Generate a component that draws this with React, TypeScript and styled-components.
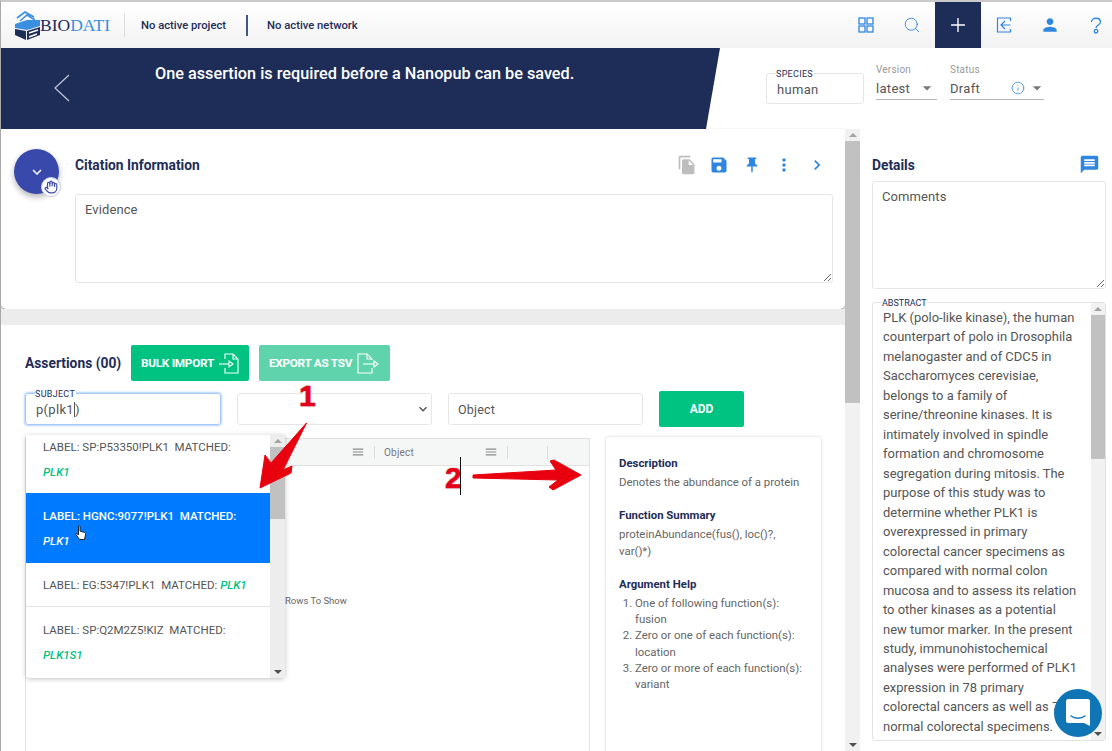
import React from 'react';
import styled, { createGlobalStyle } from 'styled-components';
import { MdFileCopy, MdSave, MdPushPin, MdMoreVert, MdChevronRight, MdMessage, MdPerson, MdMenu, MdKeyboardArrowDown, MdArrowDropDown } from 'react-icons/md';
import { LuHand, LuInfo, LuSearch, LuPlus } from 'react-icons/lu';

const navy = '#1e2d57';
const blue = '#2f86e0';
const green = '#00c281';

const GlobalStyle = createGlobalStyle`
  html, body {
    margin: 0;
    padding: 0;
    background: #fff;
    overflow: hidden;
  }
  * { box-sizing: border-box; }
  body {
    font-family: Roboto, "Liberation Sans", sans-serif;
    color: #555;
  }
`;

const Page = styled.div`
  position: relative;
  width: 1112px;
  height: 751px;
  overflow: hidden;
  display: flex;
  flex-direction: column;
  border-top: 2px solid #c9c9c9;
  border-left: 1px solid #a9a9a9;
`;

const Header = styled.header`
  height: 46px;
  flex: none;
  display: flex;
  align-items: center;
  background: linear-gradient(#ffffff, #f2f2f2);
  padding-left: 13px;
`;

const Logo = styled.div`
  width: 97px;
  display: flex;
  align-items: center;
  font-family: "Liberation Serif", serif;
  font-size: 17.5px;
  color: ${navy};
`;

const LogoAccent = styled.span`
  color: #3b8fe0;
`;

const LogoDivider = styled.div`
  width: 1px;
  height: 24px;
  background: #dcdcdc;
  margin: 0 16px 0 13px;
`;

const NavText = styled.div`
  font-size: 11.25px;
  font-weight: 500;
  color: ${navy};
  white-space: nowrap;
`;

const NavDivider = styled.div`
  width: 2px;
  height: 21px;
  background: #46557c;
  margin: 0 19px 0 20px;
`;

const NavIcons = styled.div`
  margin-left: auto;
  margin-right: -7px;
  display: flex;
  height: 100%;
`;

const NavIcon = styled.div<{ $active?: boolean }>`
  width: 46px;
  height: 100%;
  display: flex;
  align-items: center;
  justify-content: center;
  color: ${({ $active }) => ($active ? '#fff' : blue)};
  background: ${({ $active }) => ($active ? navy : 'transparent')};
`;

const BannerRow = styled.div`
  height: 81px;
  flex: none;
  display: flex;
`;

const Banner = styled.div`
  width: 719px;
  flex: none;
  background: ${navy};
  clip-path: polygon(0 0, 100% 0, 705px 100%, 0 100%);
  display: flex;
  color: #fff;
  padding: 0 0 0 52px;
`;

const BackButton = styled.svg`
  color: #b9c0d0;
  margin-top: 26px;
  flex: none;
`;

const BannerText = styled.div`
  margin: 16px 0 0 84px;
  font-size: 16.25px;
  font-weight: 500;
  line-height: 20px;
  white-space: nowrap;
`;

const BannerControls = styled.div`
  display: flex;
  padding: 16px 0 0 46px;
  align-items: flex-start;
`;

const Legend = styled.span`
  position: absolute;
  top: -5px;
  left: 9px;
  background: #fff;
  font-size: 9px;
  line-height: 10px;
  color: ${navy};
  padding-right: 1px;
`;

const SpeciesBox = styled.div`
  position: relative;
  width: 98px;
  height: 31px;
  margin-top: 9px;
  border: 1px solid #e6e6e6;
  border-radius: 3px;
  font-size: 13px;
  letter-spacing: 0.3px;
  padding: 8px 0 0 10px;
`;

const SelectWrap = styled.div<{ $w: number; $ml: number }>`
  width: ${({ $w }) => $w}px;
  margin-left: ${({ $ml }) => $ml}px;
`;

const SelectLabel = styled.div`
  font-size: 10px;
  line-height: 12px;
  color: #9a9a9a;
  letter-spacing: 0.2px;
`;

const SelectValue = styled.div`
  display: flex;
  align-items: center;
  height: 23px;
  margin-top: 1px;
  font-size: 13px;
  letter-spacing: 0.3px;
  border-bottom: 1px solid #b4b4b4;
  color: #555;
`;

const SelectSpacer = styled.span<{ $mr?: number }>`
  margin-left: auto;
  margin-right: ${({ $mr }) => $mr ?? 0}px;
  display: flex;
  align-items: center;
  color: #777;
`;

const InfoIcon = styled.span`
  display: flex;
  color: ${blue};
  margin-right: 2px;
`;

const Body = styled.div`
  flex: 1;
  min-height: 0;
  display: flex;
`;

const Main = styled.main`
  width: 844px;
  flex: none;
  display: flex;
  flex-direction: column;
`;

const CitationCard = styled.section`
  height: 180px;
  flex: none;
  background: #fff;
  border-radius: 0 0 5px 5px;
  box-shadow: 0 1px 2px rgba(0, 0, 0, 0.5);
  display: flex;
  padding: 20px 12px 0 13px;
`;

const RoundButton = styled.div`
  position: relative;
  width: 45px;
  height: 45px;
  flex: none;
  border-radius: 50%;
  background: #3949ab;
  color: #fff;
  display: flex;
  align-items: center;
  justify-content: center;
  box-shadow: 0 3px 6px rgba(0, 0, 0, 0.3);
`;

const HandBadge = styled.div`
  position: absolute;
  right: -2px;
  bottom: -3px;
  width: 20px;
  height: 20px;
  border-radius: 50%;
  background: #fff;
  border: 1px solid #c5cbe6;
  color: #3949ab;
  display: flex;
  align-items: center;
  justify-content: center;
`;

const CitationContent = styled.div`
  flex: 1;
  margin-left: 16px;
`;

const CitationHead = styled.div`
  display: flex;
  align-items: center;
  height: 32px;
  margin-bottom: 13px;
`;

const Title = styled.h3`
  margin: 0;
  font-size: 13.8px;
  font-weight: 700;
  color: ${navy};
  white-space: nowrap;
`;

const ToolIcons = styled.div`
  margin-left: auto;
  display: flex;
  align-items: center;
`;

const ToolIcon = styled.div<{ $grey?: boolean }>`
  width: 32.5px;
  display: flex;
  justify-content: center;
  color: ${({ $grey }) => ($grey ? '#bdbdbd' : blue)};
`;

const TextArea = styled.textarea<{ $h: number }>`
  display: block;
  width: 100%;
  height: ${({ $h }) => $h}px;
  border: 1px solid #e6e6e6;
  border-radius: 3px;
  background: #fff;
  font-family: Roboto, "Liberation Sans", sans-serif;
  font-size: 13px;
  padding: 7px 9px;
  color: #555;
  letter-spacing: 0.1px;
  outline: none;
  &::placeholder { color: #555; opacity: 1; }
`;

const GreyStrip = styled.div`
  height: 16px;
  flex: none;
  background: #ececec;
`;

const Assertions = styled.section`
  flex: 1;
  min-height: 0;
  padding: 20px 0 0 24px;
  background: #fff;
`;

const ActionRow = styled.div`
  display: flex;
  align-items: center;
  height: 36px;
`;

const AssertionsTitle = styled(Title)`
  width: 106px;
`;

const ActionButton = styled.div<{ $faded?: boolean; $w: number }>`
  width: ${({ $w }) => $w}px;
  height: 36px;
  margin-right: 10px;
  border-radius: 2px;
  background: ${({ $faded }) => ($faded ? '#5fd3ab' : green)};
  color: #fff;
  font-size: 11.8px;
  font-weight: 700;
  white-space: nowrap;
  letter-spacing: -0.3px;
  display: flex;
  align-items: center;
  justify-content: center;
  gap: 5px;
`;

const FieldRow = styled.div`
  display: flex;
  align-items: center;
  height: 36px;
  margin-top: 10px;
`;

const SubjectBox = styled.div`
  position: relative;
  width: 196px;
  height: 32px;
  border: 1px solid #a6c8f5;
  box-shadow: 0 0 2px 1px #b5d3fa;
  border-radius: 3px;
  font-size: 13px;
  padding: 8px 0 0 10px;
  letter-spacing: 0.3px;
`;

const RelationSelect = styled.div`
  width: 195px;
  height: 32px;
  margin-left: 16px;
  border: 1px solid #e6e6e6;
  border-radius: 3px;
  display: flex;
  align-items: center;
  justify-content: flex-end;
  color: #555;
`;

const ObjectInput = styled.div`
  width: 195px;
  height: 32px;
  margin-left: 16px;
  border: 1px solid #e6e6e6;
  border-radius: 3px;
  font-size: 12.5px;
  letter-spacing: 0.2px;
  padding: 8px 0 0 9px;
`;

const AddButton = styled.div`
  width: 85px;
  height: 36px;
  margin-left: 16px;
  background: ${green};
  color: #fff;
  border-radius: 2px;
  font-size: 12px;
  font-weight: 700;
  display: flex;
  align-items: center;
  justify-content: center;
`;

const Workspace = styled.div`
  display: flex;
  margin-top: 11px;
  height: 400px;
`;

const Grid = styled.div`
  position: relative;
  width: 565px;
  flex: none;
  border: 1px solid #e2e2e2;
`;

const GridHead = styled.div`
  height: 27px;
  display: flex;
  background: #f5f7f7;
  border-bottom: 1px solid #e2e2e2;
  justify-content: flex-end;
  align-items: center;
  font-size: 10px;
  color: #777;
  letter-spacing: 0.2px;
  padding-right: 41px;
`;

const GridMenu = styled.span`
  display: flex;
  color: #8a8a8a;
  margin-right: 9px;
`;

const GridSep = styled.span`
  width: 1px;
  height: 13px;
  background: #ddd;
`;

const ObjectColumn = styled.span`
  width: 109px;
  padding-left: 9px;
`;

const TailColumn = styled.span`
  width: 40px;
  height: 100%;
  display: flex;
  align-items: center;
  justify-content: flex-end;
`;

const HelpCard = styled.aside`
  width: 215px;
  margin-left: 16px;
  margin-top: -1px;
  flex: none;
  padding: 18px 14px 18px 13px;
  background: #fff;
  box-shadow: 0 0 3px rgba(0, 0, 0, 0.2);
  border-radius: 2px;
  font-size: 11.4px;
  line-height: 16.3px;
  color: #666;
`;

const HelpTitle = styled.h4`
  margin: 0 0 3px;
  font-size: 11.4px;
  line-height: 16px;
  font-weight: 700;
  color: ${navy};
`;

const HelpBlock = styled.div`
  margin-bottom: 17px;
`;

const HelpList = styled.ol`
  margin: 0;
  padding-left: 16px;
`;

const MainScrollbar = styled.div`
  width: 15px;
  flex: none;
  background: #f1f1f1;
  display: flex;
  flex-direction: column;
  align-items: center;
`;

const ScrollThumb = styled.div<{ $h: number }>`
  width: 100%;
  height: ${({ $h }) => $h}px;
  flex: none;
  background: #c1c1c1;
`;

const Arrow = styled.span<{ $up?: boolean; $dark?: boolean }>`
  flex: none;
  width: 0;
  height: 0;
  margin: 4px 0;
  border-left: 4px solid transparent;
  border-right: 4px solid transparent;
  ${({ $up, $dark }) =>
    $up
      ? `border-bottom: 4px solid ${$dark ? '#505050' : '#a3a3a3'};`
      : `border-top: 4px solid ${$dark ? '#505050' : '#a3a3a3'};`}
`;

const ScrollFill = styled.div`
  flex: 1;
`;

const Details = styled.aside`
  flex: 1;
  min-width: 0;
  padding: 0 6px 0 12px;
`;

const DetailsHead = styled.div`
  height: 52px;
  display: flex;
  align-items: center;
  justify-content: space-between;
  padding: 19px 6px 0 0;
  color: ${blue};
`;

const AbstractBox = styled.div`
  position: relative;
  margin-top: 13px;
  height: 439px;
  border: 1px solid #e2e2e2;
  border-radius: 3px;
  display: flex;
`;

const AbstractText = styled.div`
  flex: 1;
  height: 100%;
  overflow: hidden;
  padding: 5px 0 0 10px;
  font-size: 12.95px;
  line-height: 19.47px;
  color: #555;
  white-space: pre-line;
`;

const AbstractScroll = styled.div`
  width: 14px;
  flex: none;
  background: #f1f1f1;
  display: flex;
  flex-direction: column;
  align-items: center;
`;

const Dropdown = styled.div`
  position: absolute;
  left: 25px;
  top: 433px;
  width: 259px;
  height: 243px;
  display: flex;
  background: #fff;
  border-radius: 0 0 4px 4px;
  box-shadow: 0 1px 5px rgba(0, 0, 0, 0.25);
`;

const DropdownList = styled.div`
  width: 244px;
  flex: none;
  overflow: hidden;
`;

const DropdownItem = styled.div<{ $h: number; $pad: number; $active?: boolean; $line?: boolean }>`
  height: ${({ $h }) => $h}px;
  padding: ${({ $pad }) => $pad}px 17px 0 17px;
  background: ${({ $active }) => ($active ? '#007bff' : '#fff')};
  color: ${({ $active }) => ($active ? '#fff' : '#555')};
  font-weight: ${({ $active }) => ($active ? 500 : 400)};
  font-size: 11.5px;
  line-height: 24.5px;
  white-space: pre-wrap;
  border-bottom: ${({ $line }) => ($line ? '1px solid #e2e2e2' : 'none')};
`;

const Matched = styled.em<{ $active?: boolean }>`
  font-weight: 500;
  color: ${({ $active }) => ($active ? '#fff' : green)};
`;

const DropdownScroll = styled.div`
  width: 15px;
  flex: none;
  background: #ededed;
  display: flex;
  flex-direction: column;
  align-items: center;
`;

const RowsToShow = styled.div`
  position: absolute;
  left: 284px;
  top: 592px;
  font-size: 9.5px;
  line-height: 14px;
  color: #666;
  white-space: nowrap;
`;

const Caret = styled.span`
  display: inline-block;
  width: 1px;
  height: 15px;
  background: #555;
  vertical-align: -3px;
`;

const Annotation = styled.svg`
  position: absolute;
  left: -1px;
  top: -2px;
  pointer-events: none;
`;

const Callout = styled.div<{ $x: number; $y: number }>`
  position: absolute;
  left: ${({ $x }) => $x}px;
  top: ${({ $y }) => $y}px;
  color: #e4001b;
  font-size: 30px;
  line-height: 30px;
  font-weight: 700;
  font-family: "Liberation Sans", sans-serif;
  -webkit-text-stroke: 0.6px #e4001b;
  text-shadow: -1px -1px 0 #eee, 1px 1px 0 #ddd, -1px 1px 0 #eee, 1px -1px 0 #eee;
`;

const TextCursor = styled.div`
  position: absolute;
  left: 459px;
  top: 455px;
  width: 1px;
  height: 38px;
  background: #111;
`;

const PointerCursor = styled.svg`
  position: absolute;
  left: 74px;
  top: 523px;
`;

const Bubble = styled.div`
  position: absolute;
  left: 1053px;
  top: 687px;
  width: 48px;
  height: 48px;
  border-radius: 50%;
  background: #0f75b5;
  display: flex;
  align-items: center;
  justify-content: center;
`;

const abstractText = `PLK (polo-like kinase), the human
counterpart of polo in Drosophila
melanogaster and of CDC5 in
Saccharomyces cerevisiae,
belongs to a family of
serine/threonine kinases. It is
intimately involved in spindle
formation and chromosome
segregation during mitosis. The
purpose of this study was to
determine whether PLK1 is
overexpressed in primary
colorectal cancer specimens as
compared with normal colon
mucosa and to assess its relation
to other kinases as a potential
new tumor marker. In the present
study, immunohistochemical
analyses were performed of PLK1
expression in 78 primary
colorectal cancers as well as 78
normal colorectal specimens.
Analyses were performed`;

const LogoMark = () => (
  <svg width="27" height="29" viewBox="0 0 27 29" style={{ marginRight: -1, flex: 'none' }}>
    <path d="M1 13 L13 9 L26 9 L26 15 L13 19 L1 17Z" fill="#3b8fe0" />
    <path d="M1 18 L12 20 L12 29 L1 24Z" fill={navy} />
    <path d="M13 20 L26 16 L26 24 L13 29Z" fill={navy} />
    <path d="M3 7 L11 1 L20 6 M6 10 L13 4 L21 9" stroke="#3b8fe0" strokeWidth="1.6" fill="none" />
    <path d="M15 22 L24 19 M15 26 L23 23" stroke="#fff" strokeWidth="1.5" fill="none" />
  </svg>
);

const GridIcon = () => (
  <svg width="16" height="16" viewBox="0 0 16 16" fill="none" stroke="currentColor" strokeWidth="1.3">
    <rect x="1" y="1" width="6" height="6" />
    <rect x="9" y="1" width="6" height="6" />
    <rect x="1" y="9" width="6" height="6" />
    <rect x="9" y="9" width="6" height="6" />
  </svg>
);

const ExitIcon = () => (
  <svg width="16" height="16" viewBox="0 0 16 16" fill="none" stroke="currentColor" strokeWidth="1.2">
    <path d="M14.5 4 V1 H1.5 V15 H14.5 V12" />
    <path d="M14.5 8 H5 M9 4 L5 8 L9 12" />
  </svg>
);

const QuestionIcon = () => (
  <svg width="12" height="17" viewBox="0 0 12 17" fill="none" stroke="currentColor" strokeWidth="1.3">
    <path d="M1.5 5 C1.5 0 10.5 0 10.5 5 C10.5 8 6 8 6 11" />
    <circle cx="6" cy="14.2" r="1.8" />
  </svg>
);

const FileInIcon = () => (
  <svg width="20" height="21" viewBox="0 0 20 21" fill="none" stroke="currentColor" strokeWidth="1.1">
    <path d="M6 6 V1 H14 L19 6 V20 H6 V15" />
    <path d="M14 1 V6 H19" />
    <path d="M0 11 H10" />
    <path d="M10 8 L14 11 L10 14Z" />
  </svg>
);

const FileOutIcon = () => (
  <svg width="23" height="21" viewBox="0 0 23 21" fill="none" stroke="currentColor" strokeWidth="1.1">
    <path d="M15 7 V6 L10 1 H1 V20 H15 V15" />
    <path d="M10 1 V6 H15" />
    <path d="M6 11 H17" />
    <path d="M17 8 L21 11 L17 14Z" />
  </svg>
);

const App: React.FC = () => {
  return (
    <>
      <GlobalStyle />
      <Page>
        <Header>
          <Logo>
            <LogoMark />
            <span>
              BIO<LogoAccent>DATI</LogoAccent>
            </span>
          </Logo>
          <LogoDivider />
          <NavText>No active project</NavText>
          <NavDivider />
          <NavText>No active network</NavText>
          <NavIcons>
            <NavIcon><GridIcon /></NavIcon>
            <NavIcon><LuSearch size={18} strokeWidth={1.2} /></NavIcon>
            <NavIcon $active><LuPlus size={22} strokeWidth={1.5} /></NavIcon>
            <NavIcon><ExitIcon /></NavIcon>
            <NavIcon><MdPerson size={20} /></NavIcon>
            <NavIcon><QuestionIcon /></NavIcon>
          </NavIcons>
        </Header>

        <BannerRow>
          <Banner>
            <BackButton width="18" height="28" viewBox="0 0 18 28" fill="none" stroke="currentColor" strokeWidth="1.3">
              <path d="M16 1 L2 14 L16 27" />
            </BackButton>
            <BannerText>One assertion is required before a Nanopub can be saved.</BannerText>
          </Banner>
          <BannerControls>
            <SpeciesBox>
              <Legend>SPECIES</Legend>
              human
            </SpeciesBox>
            <SelectWrap $w={61} $ml={12}>
              <SelectLabel>Version</SelectLabel>
              <SelectValue>
                latest
                <SelectSpacer><MdArrowDropDown size={20} /></SelectSpacer>
              </SelectValue>
            </SelectWrap>
            <SelectWrap $w={94} $ml={13}>
              <SelectLabel>Status</SelectLabel>
              <SelectValue>
                Draft
                <SelectSpacer $mr={-3}>
                  <InfoIcon><LuInfo size={14} strokeWidth={1.3} /></InfoIcon>
                  <MdArrowDropDown size={20} />
                </SelectSpacer>
              </SelectValue>
            </SelectWrap>
          </BannerControls>
        </BannerRow>

        <Body>
          <Main>
            <CitationCard>
              <RoundButton>
                <MdKeyboardArrowDown size={18} />
                <HandBadge><LuHand size={14} /></HandBadge>
              </RoundButton>
              <CitationContent>
                <CitationHead>
                  <Title>Citation Information</Title>
                  <ToolIcons>
                    <ToolIcon $grey><MdFileCopy size={20} /></ToolIcon>
                    <ToolIcon><MdSave size={20} /></ToolIcon>
                    <ToolIcon><MdPushPin size={18} /></ToolIcon>
                    <ToolIcon><MdMoreVert size={20} /></ToolIcon>
                    <ToolIcon><MdChevronRight size={20} /></ToolIcon>
                  </ToolIcons>
                </CitationHead>
                <TextArea $h={89} placeholder="Evidence" readOnly />
              </CitationContent>
            </CitationCard>
            <GreyStrip />
            <Assertions>
              <ActionRow>
                <AssertionsTitle>Assertions (00)</AssertionsTitle>
                <ActionButton $w={118}>BULK IMPORT <FileInIcon /></ActionButton>
                <ActionButton $w={131} $faded>EXPORT AS TSV <FileOutIcon /></ActionButton>
              </ActionRow>
              <FieldRow>
                <SubjectBox>
                  <Legend>SUBJECT</Legend>
                  p(plk1<Caret />)
                </SubjectBox>
                <RelationSelect><MdKeyboardArrowDown size={16} /></RelationSelect>
                <ObjectInput>Object</ObjectInput>
                <AddButton>ADD</AddButton>
              </FieldRow>
              <Workspace>
                <Grid>
                  <GridHead>
                    <GridMenu><MdMenu size={14} /></GridMenu>
                    <GridSep />
                    <ObjectColumn>Object</ObjectColumn>
                    <GridMenu><MdMenu size={14} /></GridMenu>
                    <GridSep />
                    <TailColumn><GridSep /></TailColumn>
                  </GridHead>
                </Grid>
                <HelpCard>
                  <HelpBlock>
                    <HelpTitle>Description</HelpTitle>
                    Denotes the abundance of a protein
                  </HelpBlock>
                  <HelpBlock>
                    <HelpTitle>Function Summary</HelpTitle>
                    proteinAbundance(fus(), loc()?, var()*)
                  </HelpBlock>
                  <HelpTitle>Argument Help</HelpTitle>
                  <HelpList>
                    <li>One of following function(s): fusion</li>
                    <li>Zero or one of each function(s): location</li>
                    <li>Zero or more of each function(s): variant</li>
                  </HelpList>
                </HelpCard>
              </Workspace>
            </Assertions>
          </Main>

          <MainScrollbar>
            <Arrow $up />
            <ScrollThumb $h={262} />
            <ScrollFill />
            <Arrow $dark />
          </MainScrollbar>

          <Details>
            <DetailsHead>
              <Title>Details</Title>
              <MdMessage size={21} />
            </DetailsHead>
            <TextArea $h={108} placeholder="Comments" readOnly />
            <AbstractBox>
              <Legend>ABSTRACT</Legend>
              <AbstractText>{abstractText}</AbstractText>
              <AbstractScroll>
                <Arrow $up />
                <ScrollThumb $h={144} />
                <ScrollFill />
                <Arrow $dark />
              </AbstractScroll>
            </AbstractBox>
          </Details>
        </Body>

        <RowsToShow>Rows To Show</RowsToShow>

        <Dropdown>
          <DropdownList>
            <DropdownItem $h={58} $pad={0}>
              {'LABEL: SP:P53350!PLK1  MATCHED: '}<Matched>PLK1</Matched>
            </DropdownItem>
            <DropdownItem $h={70} $pad={11} $active>
              {'LABEL: HGNC:9077!PLK1  MATCHED: '}<Matched $active>PLK1</Matched>
            </DropdownItem>
            <DropdownItem $h={44} $pad={10} $line>
              {'LABEL: EG:5347!PLK1  MATCHED: '}<Matched>PLK1</Matched>
            </DropdownItem>
            <DropdownItem $h={70} $pad={11}>
              {'LABEL: SP:Q2M2Z5!KIZ  MATCHED: '}<Matched>PLK1S1</Matched>
            </DropdownItem>
          </DropdownList>
          <DropdownScroll>
            <Arrow $up />
            <ScrollThumb $h={72} />
            <ScrollFill />
            <Arrow $dark />
          </DropdownScroll>
        </Dropdown>

        <PointerCursor width="12" height="16" viewBox="0 0 12 16">
          <path
            d="M3.5 1 C4.5 0.5 5 1 5 2 V6 L9.5 7.5 C10.5 8 11 8.5 10.5 10 L9.5 14.5 H4.5 L1 9.5 C0.5 8.5 1.5 8 2.5 9 L3.5 10Z"
            fill="#fff"
            stroke="#222"
            strokeWidth="1"
          />
        </PointerCursor>

        <Annotation width="1112" height="751" viewBox="0 0 1112 751">
          <path d="M306.5 423 L271 463 L265 455 L260 488 L291 473 L292 466 L283 470Z" fill="#e8000f" strokeLinejoin="round" stroke="#e8000f" strokeWidth="1" />
          <path d="M473 475 L556 470 L550 461 L554 460 L581 475 L553 490 L549 487 L558 480 L473 478Z" fill="#e8000f" strokeLinejoin="round" stroke="#e8000f" strokeWidth="1" />
        </Annotation>
        <Callout $x={298} $y={379}>1</Callout>
        <Callout $x={444} $y={461}>2</Callout>
        <TextCursor />

        <Bubble>
          <svg width="24" height="28" viewBox="0 0 24 28">
            <path d="M2 0 H22 C23 0 24 1 24 2 V27 L18 24 H2 C1 24 0 23 0 22 V2 C0 1 1 0 2 0Z" fill="#fff" />
            <path d="M5 17 C9 20 15 20 19 17" stroke="#0f75b5" strokeWidth="1.5" fill="none" strokeLinecap="round" />
          </svg>
        </Bubble>
      </Page>
    </>
  );
};

export default App;
